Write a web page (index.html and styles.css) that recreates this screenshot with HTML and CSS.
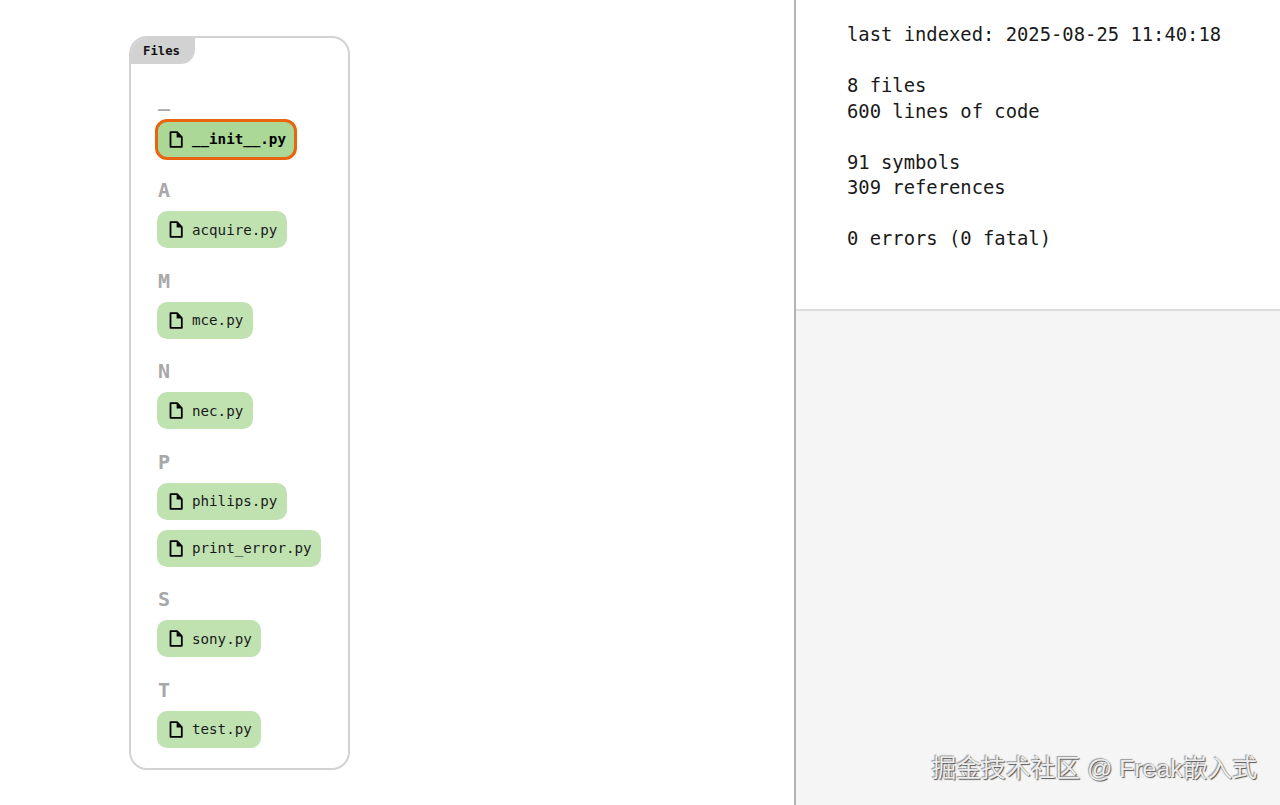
FILE: index.html
```html
<!DOCTYPE html>
<html lang="en">
<head>
    <meta charset="UTF-8">
    <meta name="viewport" content="width=device-width, initial-scale=1.0">
    <title>Files</title>
    <link rel="stylesheet" href="styles.css">
</head>
<body>
    <svg class="defs" width="0" height="0">
        <symbol id="file" viewBox="0 0 14 17">
            <path d="M1.5 1.2h6.6l4.7 4.9v9.7H1.5z" fill="none" stroke="#000" stroke-width="1.8" stroke-linejoin="round"/>
            <path d="M7.6 1.2l5.2 5.4H7.6z" fill="#000"/>
        </symbol>
    </svg>
    <main class="left-pane">
        <section class="card">
            <div class="card-tab">Files</div>
            <div class="group first">
                <h2 class="group-title symbol">_</h2>
                <a class="chip selected"><svg class="chip-icon"><use href="#file"/></svg>__init__.py</a>
            </div>
            <div class="group">
                <h2 class="group-title">A</h2>
                <a class="chip"><svg class="chip-icon"><use href="#file"/></svg>acquire.py</a>
            </div>
            <div class="group">
                <h2 class="group-title">M</h2>
                <a class="chip"><svg class="chip-icon"><use href="#file"/></svg>mce.py</a>
            </div>
            <div class="group">
                <h2 class="group-title">N</h2>
                <a class="chip"><svg class="chip-icon"><use href="#file"/></svg>nec.py</a>
            </div>
            <div class="group">
                <h2 class="group-title">P</h2>
                <a class="chip"><svg class="chip-icon"><use href="#file"/></svg>philips.py</a>
                <a class="chip"><svg class="chip-icon"><use href="#file"/></svg>print_error.py</a>
            </div>
            <div class="group">
                <h2 class="group-title">S</h2>
                <a class="chip"><svg class="chip-icon"><use href="#file"/></svg>sony.py</a>
            </div>
            <div class="group">
                <h2 class="group-title">T</h2>
                <a class="chip"><svg class="chip-icon"><use href="#file"/></svg>test.py</a>
            </div>
        </section>
    </main>
    <aside class="right-pane">
        <pre class="stats">last indexed: 2025-08-25 11:40:18

8 files
600 lines of code

91 symbols
309 references

0 errors (0 fatal)</pre>
        <div class="empty-panel"></div>
    </aside>
    <div class="watermark">掘金技术社区 @ Freak嵌入式</div>
</body>
</html>
```

FILE: styles.css
```css
* {
    box-sizing: border-box;
}
body {
    margin: 0;
    height: 805px;
    display: flex;
    overflow: hidden;
    background-color: #fff;
    font-family: "DejaVu Sans Mono", monospace;
}
.defs {
    position: absolute;
}
.left-pane {
    width: 794px;
    padding: 36px 0 0 129px;
}
.card {
    width: 220.5px;
    height: 734px;
    border: 2px solid #d2d2d2;
    border-radius: 18px;
    padding: 0 26px;
    overflow: hidden;
}
.card-tab {
    width: 64px;
    height: 27px;
    margin: -1px 0 0 -26px;
    padding: 6px 0 0 12px;
    background-color: #d2d2d2;
    border-bottom-right-radius: 14px;
    font-size: 12.3px;
    line-height: 16px;
    font-weight: bold;
    color: #111;
}
.group {
    display: flex;
    flex-direction: column;
    align-items: flex-start;
    gap: 10px;
    padding-top: 16.5px;
}
.group.first {
    padding-top: 18.5px;
}
.group-title {
    height: 33px;
    margin: 0 0 -6px;
    padding-left: 1px;
    font-size: 20px;
    line-height: 33px;
    font-weight: bold;
    color: #a8a8a8;
}
.group-title.symbol {
    margin-bottom: -5px;
}
.chip {
    display: flex;
    align-items: center;
    height: 37px;
    padding: 0 9.5px 0 12px;
    background-color: #c0e2b1;
    border-radius: 10px;
    font-size: 14.2px;
    color: #1a1a1a;
}
.chip-icon {
    width: 14px;
    height: 17px;
    margin-right: 9px;
    flex-shrink: 0;
}
.selected {
    background-color: #abd797;
    font-weight: bold;
    outline: 3px solid #e9640f;
    outline-offset: -1px;
    color: #000;
}
.right-pane {
    flex: 1;
    display: flex;
    flex-direction: column;
    border-left: 2px solid #b4b4b4;
}
.stats {
    margin: 0;
    height: 311px;
    padding: 22px 0 0 51px;
    border-bottom: 2px solid #dcdcdc;
    font-family: "DejaVu Sans Mono", monospace;
    font-size: 18.83px;
    line-height: 25.5px;
    color: #1a1a1a;
}
.empty-panel {
    flex: 1;
    background-color: #f5f5f5;
}
.watermark {
    position: absolute;
    right: 23px;
    bottom: 21px;
    font-family: "Liberation Sans", "Noto Sans CJK SC", sans-serif;
    font-size: 24.8px;
    line-height: 30px;
    color: #ededed;
    text-shadow: 1px 1px 1px #555, -1px -1px 1px #999;
}
```
